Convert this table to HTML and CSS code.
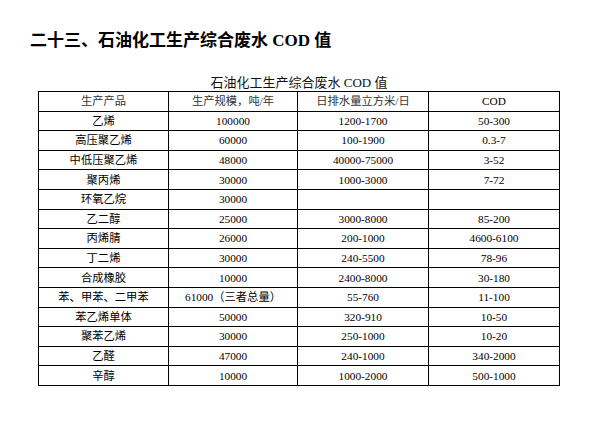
FILE: index.html
```html
<!DOCTYPE html>
<html>
<head>
  <meta charset="utf-8">
  <link rel="stylesheet" href="styles.css">
</head>
<body>
  <div class="page">
    <h1 class="title">二十三、石油化工生产综合废水 COD 值</h1>

    <table class="cod-table">
      <caption>石油化工生产综合废水 COD 值</caption>
      <colgroup>
        <col class="col-a">
        <col class="col-b">
        <col class="col-c">
        <col class="col-d">
      </colgroup>
      <thead>
        <tr>
          <th>生产产品</th>
          <th>生产规模，吨/年</th>
          <th>日排水量立方米/日</th>
          <th class="latin">COD</th>
        </tr>
      </thead>
      <tbody>
        <tr><td>乙烯</td><td>100000</td><td>1200-1700</td><td>50-300</td></tr>
        <tr><td>高压聚乙烯</td><td>60000</td><td>100-1900</td><td>0.3-7</td></tr>
        <tr><td>中低压聚乙烯</td><td>48000</td><td>40000-75000</td><td>3-52</td></tr>
        <tr><td>聚丙烯</td><td>30000</td><td>1000-3000</td><td>7-72</td></tr>
        <tr><td>环氧乙烷</td><td>30000</td><td></td><td></td></tr>
        <tr><td>乙二醇</td><td>25000</td><td>3000-8000</td><td>85-200</td></tr>
        <tr><td>丙烯腈</td><td>26000</td><td>200-1000</td><td>4600-6100</td></tr>
        <tr><td>丁二烯</td><td>30000</td><td>240-5500</td><td>78-96</td></tr>
        <tr><td>合成橡胶</td><td>10000</td><td>2400-8000</td><td>30-180</td></tr>
        <tr><td>苯、甲苯、二甲苯</td><td>61000（三者总量）</td><td>55-760</td><td>11-100</td></tr>
        <tr><td>苯乙烯单体</td><td>50000</td><td>320-910</td><td>10-50</td></tr>
        <tr><td>聚苯乙烯</td><td>30000</td><td>250-1000</td><td>10-20</td></tr>
        <tr><td>乙醛</td><td>47000</td><td>240-1000</td><td>340-2000</td></tr>
        <tr><td>辛醇</td><td>10000</td><td>1000-2000</td><td>500-1000</td></tr>
      </tbody>
    </table>
  </div>
</body>
</html>
```

FILE: styles.css
```css
* {
  box-sizing: border-box;
  margin: 0;
  padding: 0;
}

body {
  font-family: "Liberation Serif", "Noto Sans CJK SC", serif;
  background: #fff;
  color: #000;
}

.page {
  padding: 31px 0 0 30px;
}

.title {
  font-size: 17px;
  line-height: 20px;
  font-weight: bold;
  color: #000;
  margin-bottom: 24px;
}

.cod-table {
  margin-left: 8px;
  width: 521px;
  border-collapse: collapse;
  table-layout: fixed;
  font-size: 11.3px;
}

.cod-table caption {
  font-size: 13px;
  line-height: 16px;
  color: #111;
  text-align: center;
}

.col-a { width: 130px; }
.col-b { width: 129px; }
.col-c { width: 131px; }
.col-d { width: 131px; }

.cod-table th,
.cod-table td {
  border: 1px solid #000;
  height: 19.6px;
  padding: 0;
  text-align: center;
  vertical-align: middle;
  font-weight: normal;
  line-height: 14px;
  white-space: nowrap;
}

.cod-table th {
  color: #333;
}

.cod-table th.latin {
  color: #000;
}
```
